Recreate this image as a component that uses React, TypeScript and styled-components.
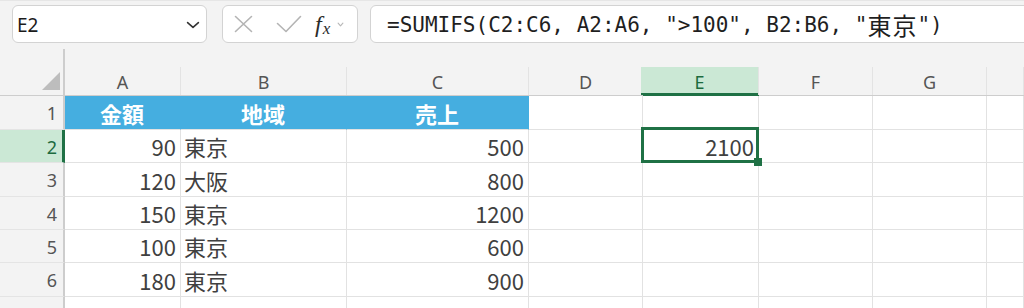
import React from "react";
import styled, { createGlobalStyle, css } from "styled-components";

const GREEN = "#1f7145";
const GRID = "#e2e2e2";
const HEAD_BG = "#f3f3f3";
const HEAD_LINE = "#cdcdcd";

const Global = createGlobalStyle`
  html, body { margin: 0; padding: 0; background: ${HEAD_BG}; }
  * { box-sizing: border-box; }
`;

const Root = styled.div`
  width: 1024px;
  height: 308px;
  overflow: hidden;
  background: ${HEAD_BG};
  display: flex;
  flex-direction: column;
  border-top: 1px solid #e6e6e6;
`;

const TopBar = styled.div`
  display: flex;
  align-items: flex-start;
  height: 47px;
  padding: 4px 0 0 12px;
  gap: 12px;
  flex-shrink: 0;
`;

const Field = styled.div`
  height: 38px;
  background: #fff;
  border: 1px solid #d3d3d3;
  border-radius: 6px;
  display: flex;
  align-items: center;
  flex-shrink: 0;
`;

const NameBox = styled(Field)`
  width: 195px;
  margin-right: 3px;
  justify-content: space-between;
  padding: 2px 6px 0 4px;
  font-family: "Noto Sans", sans-serif;
  font-size: 19px;
  color: #1b1b1b;
`;

const FxBox = styled(Field)`
  width: 136px;
  padding: 0 0 0 11px;
`;

const IconSlot = styled.span<{ $ml?: number }>`
  display: flex;
  align-items: center;
  margin-left: ${(p) => p.$ml ?? 0}px;
`;

const FxGlyph = styled.span`
  font-family: "Liberation Serif", serif;
  font-style: italic;
  color: #2b2b2b;
  display: flex;
  align-items: baseline;
  margin-left: 13px;
  line-height: 1;
  & > b {
    font-weight: 400;
    font-size: 24px;
  }
  & > i {
    font-size: 17px;
    margin-left: 1px;
    position: relative;
    top: 2px;
  }
`;

const FormulaBox = styled(Field)`
  width: 700px;
  padding: 1px 0 0 16px;
  font-family: "DejaVu Sans Mono", "Noto Sans CJK JP", monospace;
  font-size: 21px;
  color: #1f1f1f;
  white-space: pre;
`;

const Wide = styled.span`
  font-family: "Noto Sans CJK JP", sans-serif;
  font-size: 24px;
  line-height: 1;
  letter-spacing: 1px;
`;

const Sheet = styled.div`
  display: grid;
  grid-template-columns: 65px 116px 166px 182px 114px 116px 114px 114px 1fr;
  grid-template-rows: 48px 34px 33px 34px 33px 33px 34px 34px;
  background: #fff;
  flex-shrink: 0;
`;

const Corner = styled.div`
  background: ${HEAD_BG};
  padding-top: 1px;
  display: flex;
`;

const CornerInner = styled.div`
  flex: 1;
  border-right: 2px solid ${HEAD_LINE};
  border-bottom: 1px solid ${HEAD_LINE};
  display: flex;
  align-items: flex-end;
  justify-content: flex-end;
  padding: 0 3px 5px 0;
`;

const Triangle = styled.div`
  width: 18px;
  height: 18px;
  background: #bdbdbd;
  clip-path: polygon(100% 0, 100% 100%, 0 100%);
`;

const ColHeader = styled.div<{ $sel?: boolean }>`
  background: ${HEAD_BG};
  padding-top: 19px;
  display: flex;
  border-bottom: 1px solid ${(p) => (p.$sel ? GREEN : HEAD_LINE)};
`;

const ColLabel = styled.div<{ $sel?: boolean }>`
  flex: 1;
  border-right: 1px solid #e3e3e3;
  display: flex;
  align-items: center;
  justify-content: center;
  padding-top: 1px;
  font-family: "Noto Sans", sans-serif;
  font-size: 18px;
  color: #555;
  ${(p) =>
    p.$sel &&
    css`
      background: #cbe8d5;
      color: #1d6b3f;
      box-shadow: inset 0 -2px 0 ${GREEN};
      margin-left: -2px;
    `}
`;

const RowHeader = styled.div<{ $sel?: boolean }>`
  background: ${(p) => (p.$sel ? "#cbe8d5" : HEAD_BG)};
  border-right: ${(p) => (p.$sel ? `3px solid ${GREEN}` : `2px solid ${HEAD_LINE}`)};
  border-bottom: 1px solid #e4e4e4;
  display: flex;
  align-items: center;
  justify-content: flex-end;
  padding: 1px ${(p) => (p.$sel ? 5 : 6)}px 0 0;
  font-family: "Noto Sans", sans-serif;
  font-size: 18px;
  color: ${(p) => (p.$sel ? "#1d6b3f" : "#555")};
`;

const Cell = styled.div<{ $align?: "left" | "right" | "center"; $head?: boolean }>`
  position: relative;
  border-right: 1px solid ${(p) => (p.$head ? "#45aee0" : GRID)};
  border-bottom: 1px solid ${GRID};
  display: flex;
  align-items: center;
  justify-content: ${(p) =>
    p.$align === "right" ? "flex-end" : p.$align === "center" ? "center" : "flex-start"};
  padding: 0 4px 0 3px;
  font-family: "Noto Sans CJK JP", sans-serif;
  font-size: 22px;
  color: #404040;
  white-space: nowrap;
  ${(p) =>
    p.$head &&
    css`
      background: #45aee0;
      color: #fff;
      font-weight: 700;
    `}
`;

const ActiveFrame = styled.div`
  position: absolute;
  top: -3px;
  left: -2px;
  right: -1px;
  bottom: -1px;
  border: 3px solid ${GREEN};
  pointer-events: none;
  z-index: 1;
`;

const FillHandle = styled.div`
  position: absolute;
  right: -4px;
  bottom: -4px;
  width: 8px;
  height: 8px;
  background: ${GREEN};
  z-index: 2;
`;

const cols = ["A", "B", "C", "D", "E", "F", "G", ""];

const data: [number, string, number][] = [
  [90, "東京", 500],
  [120, "大阪", 800],
  [150, "東京", 1200],
  [100, "東京", 600],
  [180, "東京", 900],
];

const Chevron = ({ w, h, color, sw }: { w: number; h: number; color: string; sw: number }) => (
  <svg width={w} height={h} viewBox={`0 0 ${w} ${h}`} fill="none">
    <polyline
      points={`${sw},${sw} ${w / 2},${h - sw} ${w - sw},${sw}`}
      stroke={color}
      strokeWidth={sw}
      strokeLinecap="round"
      strokeLinejoin="round"
    />
  </svg>
);

const EmptyCells = ({ from }: { from: number }) => (
  <>
    {cols.slice(from).map((c) => (
      <Cell key={c || "h"} />
    ))}
  </>
);

export default function App() {
  return (
    <>
      <Global />
      <Root>
        <TopBar>
          <NameBox>
            <span>E2</span>
            <Chevron w={14} h={8} color="#333" sw={1.6} />
          </NameBox>
          <FxBox>
            <IconSlot>
              <svg width="19" height="18" viewBox="0 0 19 18" fill="none">
                <path d="M1.5 1.5 L17.5 16.5 M17.5 1.5 L1.5 16.5" stroke="#b4b4b4" strokeWidth="1.6" strokeLinecap="round" />
              </svg>
            </IconSlot>
            <IconSlot $ml={23}>
              <svg width="26" height="18" viewBox="0 0 26 18" fill="none">
                <polyline points="1.5,8.5 10,16.5 24.5,1.5" stroke="#b4b4b4" strokeWidth="1.6" strokeLinecap="round" strokeLinejoin="round" />
              </svg>
            </IconSlot>
            <FxGlyph>
              <b>f</b>
              <i>x</i>
            </FxGlyph>
            <IconSlot $ml={7}>
              <Chevron w={7} h={5} color="#b8b8b8" sw={1.1} />
            </IconSlot>
          </FxBox>
          <FormulaBox>
            =SUMIFS(C2:C6, A2:A6, "&gt;100", B2:B6, "<Wide>東京</Wide>")
          </FormulaBox>
        </TopBar>
        <Sheet>
          <Corner>
            <CornerInner>
              <Triangle />
            </CornerInner>
          </Corner>
          {cols.map((c) => (
            <ColHeader key={c || "last"} $sel={c === "E"}>
              <ColLabel $sel={c === "E"}>{c}</ColLabel>
            </ColHeader>
          ))}

          <RowHeader>1</RowHeader>
          <Cell $head $align="center">金額</Cell>
          <Cell $head $align="center">地域</Cell>
          <Cell $head $align="center">売上</Cell>
          <EmptyCells from={3} />

          {data.map(([amt, area, sales], i) => (
            <React.Fragment key={i}>
              <RowHeader $sel={i === 0}>{i + 2}</RowHeader>
              <Cell $align="right">{amt}</Cell>
              <Cell>{area}</Cell>
              <Cell $align="right">{sales}</Cell>
              <Cell />
              {i === 0 ? (
                <Cell $align="right">
                  2100
                  <ActiveFrame />
                  <FillHandle />
                </Cell>
              ) : (
                <Cell />
              )}
              <Cell />
              <Cell />
              <Cell />
            </React.Fragment>
          ))}

          <RowHeader>7</RowHeader>
          <EmptyCells from={0} />
        </Sheet>
      </Root>
    </>
  );
}
